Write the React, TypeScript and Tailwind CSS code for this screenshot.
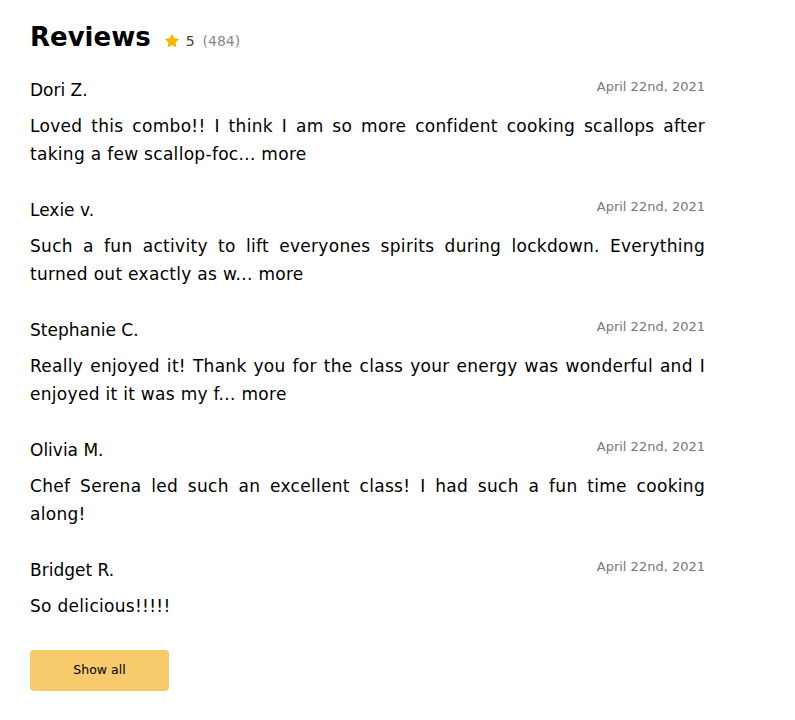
import React from "react";

const reviews = [
  {
    name: "Dori Z.",
    text: "Loved this combo!! I think I am so more confident cooking scallops after taking a few scallop-foc... more",
  },
  {
    name: "Lexie v.",
    text: "Such a fun activity to lift everyones spirits during lockdown. Everything turned out exactly as w... more",
  },
  {
    name: "Stephanie C.",
    text: "Really enjoyed it! Thank you for the class your energy was wonderful and I enjoyed it it was my f... more",
  },
  {
    name: "Olivia M.",
    text: "Chef Serena led such an excellent class! I had such a fun time cooking along!",
  },
  {
    name: "Bridget R.",
    text: "So delicious!!!!!",
  },
];

export default function App() {
  return (
    <div
      className="bg-white w-[795px] min-h-[720px] text-black"
      style={{ fontFamily: '"DejaVu Sans", "Noto Sans", sans-serif' }}
    >
      <div className="w-[675px] ml-[30px] pt-[19px]">
        <div className="flex items-center">
          <h2 className="text-[26px] leading-[36px] font-bold">Reviews</h2>
          <div className="flex items-center ml-[12px] mt-[8px]">
            <svg width="18" height="18" viewBox="0 0 24 24" className="mr-[5px]">
              <path
                d="M12 2.2l2.95 6.2 6.75.85-4.95 4.65 1.3 6.7L12 17.3l-6.05 3.3 1.3-6.7L2.3 9.25l6.75-.85z"
                fill="#f7b500"
              />
            </svg>
            <span className="text-[14px] text-[#444]">5</span>
            <span className="text-[14px] text-[#888] ml-[8px]">(484)</span>
          </div>
        </div>
        <div className="mt-[23px] flex flex-col gap-[30px]">
          {reviews.map((r) => (
            <div key={r.name}>
              <div className="flex justify-between items-start">
                <span className="text-[17px] leading-[24px]">{r.name}</span>
                <span className="text-[13px] leading-[20px] text-[#777] -mt-[1px]">April 22nd, 2021</span>
              </div>
              <p className="mt-[10px] text-[17px] leading-[28px] text-justify tracking-[0.3px]">{r.text}</p>
            </div>
          ))}
        </div>
        <button className="mt-[30px] w-[139px] h-[41px] rounded-[4px] bg-[#f7cb6b] text-[12.5px] text-black">
          Show all
        </button>
      </div>
    </div>
  );
}
